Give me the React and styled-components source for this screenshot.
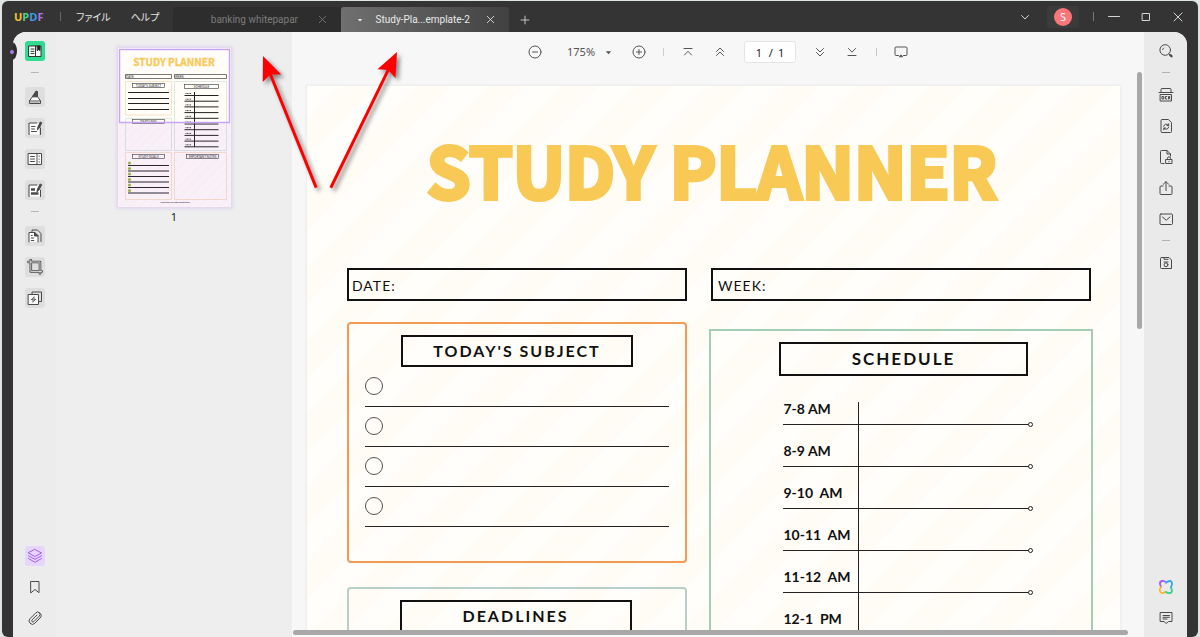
import React from "react"
import styled, { createGlobalStyle, css } from "styled-components"

const GlobalStyle = createGlobalStyle`
  * {
    box-sizing: border-box;
  }
  body {
    margin: 0;
    background: #dfe5e4;
    font-family: "Noto Sans", "Noto Sans CJK JP", sans-serif;
    font-size: 11px;
  }
  button {
    padding: 0;
    border: 0;
    background: none;
    font: inherit;
    color: inherit;
  }
  svg {
    display: block;
  }
`

const Frame = styled.div`
  position: relative;
  display: flex;
  flex-direction: column;
  height: 100vh;
  overflow: hidden;
`

const Shell = styled.div`
  flex: 1;
  min-height: 0;
  display: flex;
  flex-direction: column;
  margin: 1px 2px 0;
  border-radius: 6px;
  background: #343434;
  overflow: hidden;
`

const TitleBar = styled.header`
  display: flex;
  align-items: stretch;
  height: 31px;
  flex: none;
  padding: 0 4px 0 12px;
  color: #d6d6d6;
`

const Logo = styled.div`
  align-self: center;
  width: 46px;
  font: 700 11px/16px "Open Sans", sans-serif;
`

const LogoLetter = styled.span`
  color: ${p => p.$color};
`

const Divider = styled.span`
  align-self: center;
  flex: none;
  width: 1px;
  height: ${p => p.$height}px;
  margin-right: ${p => p.$after || 0}px;
  background: ${p => p.$color};
`

const Menu = styled.nav`
  display: flex;
  gap: 20px;
  width: 112px;
  padding-left: 15px;
`

const MenuButton = styled.button`
  flex: none;
  font-family: "Noto Sans CJK JP", sans-serif;
  font-feature-settings: "palt";
  font-size: 10px;
  color: #e4e4e4;
`

const Tab = styled.div`
  display: flex;
  align-items: center;
  width: 168px;
  margin-top: 6px;
  padding: 0 12px;
  border-radius: 3px 3px 0 0;
  color: #7c7c7c;
  background: #2d2d2d;
  ${p => p.$active && css`
    color: #e9e9e9;
    background: linear-gradient(90deg, #707070, #414141);
  `}
`

const TabName = styled.span`
  flex: 1;
  font-family: Roboto, sans-serif;
  font-size: 10px;
  text-align: right;
  white-space: nowrap;
`

const TabButton = styled.button`
  display: grid;
  place-items: center;
  width: ${p => p.$wide ? 32 : 14}px;
  margin-left: ${p => p.$push || 0}px;
`

const NewTab = styled(TabButton)`
  margin-top: 6px;
`

const WindowButtons = styled.div`
  display: flex;
  align-items: center;
  margin-left: auto;
`

const WindowButton = styled.button`
  display: grid;
  place-items: center;
  width: 32px;
  height: 22px;
  margin-right: ${p => p.$after || 0}px;
  background: ${p => p.$raised ? "#3b3b3b" : "none"};
  border-radius: 3px;
`

const Avatar = styled.span`
  width: 18px;
  height: 18px;
  border-radius: 50%;
  background: #fb7679;
  color: #fff;
  font-size: 11px;
  line-height: 18px;
  text-align: center;
`

const Body = styled.div`
  flex: 1;
  min-height: 0;
  display: grid;
  grid-template-columns: 43px 236px 1fr 43px;
  margin: 0 11px;
  border-radius: 13px 13px 0 0;
  background: #f7f7f7;
  overflow: hidden;
`

const Rail = styled.aside`
  position: relative;
  display: flex;
  flex-direction: column;
  align-items: center;
  gap: 11px;
  padding: 9px 0;
  color: #4a4a4a;
  background: ${p => p.$bg};
`

const RailSeparator = styled.span`
  width: 8px;
  height: 1px;
  flex: none;
  margin-bottom: ${p => p.$space}px;
  background: #b5b5b5;
`

const RailSpacer = styled.span`
  flex: 1;
`

const RailButton = styled.button`
  display: grid;
  place-items: center;
  flex: none;
  width: 20px;
  height: 20px;
  border-radius: 3px;
  background: ${p => p.$bg || "none"};
  color: ${p => p.$color || "inherit"};
`

const Notch = styled.span`
  position: absolute;
  left: -6px;
  top: 10px;
  width: 10px;
  height: 18px;
  border-radius: 50%;
  background: #2c2c2c;
`

const NotchDot = styled.span`
  position: absolute;
  z-index: 1;
  left: 10px;
  top: 50px;
  width: 4px;
  height: 4px;
  border-radius: 50%;
  background: #b07ae8;
`

const Thumbnails = styled.section`
  display: flex;
  flex-direction: column;
  align-items: center;
  padding-top: 16px;
  background: #eeeeee;
  color: #222;
`

const ThumbButton = styled.button`
  box-shadow: 0 0 3px 2px #e2d8ee;
`

const ThumbNumber = styled.span`
  margin-top: 3px;
  line-height: 14px;
`

const Viewer = styled.main`
  display: flex;
  flex-direction: column;
  min-width: 0;
  min-height: 0;
`

const Toolbar = styled.div`
  display: flex;
  align-items: center;
  justify-content: center;
  gap: 16px;
  height: 40px;
  flex: none;
  color: #555;
`

const ToolButton = styled.button`
  width: 16px;
  height: 16px;
`

const ZoomBox = styled.label`
  display: grid;
  grid-template-columns: 1fr 8px;
  align-items: center;
  width: 46px;
  margin: 0 2px 0 8px;
`

const ZoomSelect = styled.select`
  appearance: none;
  width: 38px;
  padding: 0;
  border: 0;
  background: none;
  color: #555;
  font: 11px/16px "Noto Sans", sans-serif;
`

const PageBox = styled.label`
  display: flex;
  align-items: center;
  justify-content: center;
  gap: 5px;
  width: 52px;
  height: 22px;
  border: 1px solid #e4e4e4;
  border-radius: 3px;
  background: #fff;
  color: #222;
`

const PageInput = styled.input`
  width: 8px;
  padding: 0;
  border: 0;
  background: none;
  color: inherit;
  font: inherit;
`

const Canvas = styled.div`
  flex: 1;
  min-height: 0;
  display: flex;
  align-items: flex-start;
  padding: 0 2px 0 15px;
`

const VScroll = styled.span`
  flex: none;
  width: 5px;
  height: 257px;
  margin-left: 17px;
  border-radius: 3px;
  background: #a8a8a8;
`

const HScroll = styled.span`
  flex: none;
  height: 5px;
  margin: 0 16px 2px 1px;
  border-radius: 3px;
  background: #a8a8a8;
`

const Sheet = styled.article`
  flex: 1;
  align-self: stretch;
  display: flex;
  flex-direction: column;
  min-width: 0;
  margin-top: 14px;
  padding: 0 27px 0 40px;
  overflow: hidden;
  color: #111;
  font-family: Lato, sans-serif;
  background: repeating-linear-gradient(
    135deg,
    #fffefa 0,
    #fffefa 22px,
    #fffbf5 28px,
    #fffbf5 48px,
    #fffefa 52px
  );
  box-shadow: 0 0 2px 1px #ebebeb;
`

const SheetTitle = styled.h1`
  flex: none;
  margin: 0;
  padding: 33px 16px 0 0;
  height: 182px;
  color: #f9c956;
  font: 700 70px/100px "Noto Sans CJK SC", sans-serif;
  -webkit-text-stroke: 4px #f9c956;
  text-align: center;
  white-space: nowrap;
`

const Columns = styled.div`
  flex: 1;
  min-height: 0;
  display: grid;
  grid-template-columns: 340fr 384fr;
  gap: 22px;
`

const Column = styled.div`
  display: flex;
  flex-direction: column;
  min-height: 0;
`

const Field = styled.div`
  flex: none;
  height: 33px;
  margin: 0 ${p => p.$inset || 0}px ${p => p.$below}px;
  padding-left: ${p => p.$pad}px;
  border: 2px solid #111;
  font-size: 14px;
  line-height: 32px;
  letter-spacing: 1px;
`

const Card = styled.section`
  flex: none;
  display: flex;
  flex-direction: column;
  align-items: center;
  padding-top: 11px;
  border: 2px solid ${p => p.$color};
  border-radius: ${p => p.$round ? 4 : 0}px;
`

const SubjectCard = styled(Card)`
  height: 241px;
  margin-bottom: 24px;
`

const ScheduleCard = styled(Card)`
  height: 600px;
  padding-left: 5px;
`

const DeadlineCard = styled(Card)`
  height: 241px;
  padding-right: 3px;
`

const CardTitle = styled.h2`
  flex: none;
  width: ${p => p.$large ? 249 : 232}px;
  margin: 0;
  border: 2px solid #111;
  font-size: ${p => p.$large ? 17 : 16}px;
  font-weight: 700;
  line-height: ${p => p.$large ? 30 : 28}px;
  letter-spacing: 2px;
  text-align: center;
`

const TaskList = styled.ul`
  align-self: stretch;
  margin: 0 16px;
  padding: 0;
  list-style: none;
`

const Task = styled.li`
  display: flex;
  height: 40px;
  padding-top: 10px;
  border-bottom: 1px solid #222;
`

const TaskRing = styled.span`
  width: 18px;
  height: 18px;
  border: 1px solid #555;
  border-radius: 50%;
`

const Hours = styled.table`
  width: 246px;
  margin: 26px 0 0 4px;
  border-spacing: 0;
  table-layout: fixed;
`

const Hour = styled.th`
  width: 76px;
  height: 42px;
  padding: 0 0 8px 1px;
  border-right: 1px solid #222;
  border-bottom: 1px solid #222;
  vertical-align: bottom;
  text-align: left;
  font-size: 14px;
  line-height: 14px;
  font-weight: 700;
  white-space: pre;

  tr:first-child & {
    height: 23px;
  }
`

const Plan = styled.td`
  position: relative;
  padding: 0;
  border-bottom: 1px solid #222;

  &::after {
    content: "";
    position: absolute;
    right: -4px;
    bottom: -3px;
    width: 5px;
    height: 5px;
    box-sizing: border-box;
    border: 1px solid #222;
    border-radius: 50%;
    background: #fffefa;
  }
`

const Annotations = styled.svg`
  position: absolute;
  left: 0;
  top: 0;
  filter: drop-shadow(3px 3px 2px rgba(0, 0, 0, 0.45));
  pointer-events: none;
`

const Icon = ({ children, size = 16, width = 1 }) => (
  <svg
    width={size}
    height={size}
    viewBox="0 0 16 16"
    fill="none"
    stroke="currentColor"
    strokeWidth={width}
    strokeLinecap="round"
    strokeLinejoin="round"
    aria-hidden="true">
    {children}
  </svg>
)

const icons = {
  reader: <>
    <path d="M2 3h12v10.500H2z" fill="#fff" stroke="#333" />
    <path d="M4 6h3M4 8.300h3M4 10.600h3M8.500 3v10.500" stroke="#333" />
    <path d="M10.500 3h2.500v4.500l-1.200-1-1.300 1z" fill="#222" stroke="#222" />
  </>,
  comment: <>
    <path d="M5.500 7.500L2.500 12v2.500h11V12l-3-4.500z" fill="#fff" />
    <path d="M2.500 12h11" />
    <path d="M5.500 7.500L9 2l1.500.5V7.500z" fill="currentColor" />
    <path d="M4 14h8" strokeWidth="1.500" opacity="0.5" />
  </>,
  edit: <>
    <path d="M2.500 3h9.500v11.500h-9.500z" fill="#fff" stroke="none" />
    <path d="M10 3H2v11.500M13.500 8v6.500" />
    <path d="M4.500 6.500h3.500M4.500 9h3M4.500 11.500h5" />
    <path d="M10.500 9.500l.4-2.500 2.300-5 1.600.7-2.300 5z" fill="currentColor" />
  </>,
  form: <>
    <path d="M1.500 2.500h13v11h-13z" fill="#fff" />
    <path d="M10 2.500v11M3.500 5.500h4M3.500 8h4M3.500 10.500h4M12.200 5v.5M12.200 8v.3M12.200 10.700v.5" />
  </>,
  fill: <>
    <path d="M2.500 3h11v11.500h-11z" fill="#fff" stroke="none" />
    <path d="M10 3H2v11.500M13.500 8v6.500" />
    <path d="M4 7.500h4M4 11.500h7.500" strokeWidth="2.500" strokeLinecap="butt" />
    <path d="M10 9.500l.6-2.500 2.500-5 1.600.7-2.500 5z" fill="currentColor" />
  </>,
  pages: <>
    <path d="M5 3.500V2h5.500l3.500 3.500v8" />
    <path d="M2 14V4.500h5.500L11 8v6" fill="#fff" />
    <path d="M7.500 4.500V8H11z" fill="currentColor" />
    <path d="M4.300 7.500h1M4.300 10h2.500M4.300 12.500h2.500" />
  </>,
  crop: <>
    <path d="M1.500 3h11.500v11.500M3.800 1v11.500h11" strokeWidth="2.600" />
    <path d="M1.500 3h11.500v11.500M3.800 1v11.500h11" stroke="#eee" strokeWidth="0.800" />
  </>,
  convert: <>
    <path d="M5 4V2h9.500v9.500h-2.500" />
    <path d="M1.500 4.500h10v10h-10z" fill="#f7f7f7" />
    <path d="M4.500 9.500L7 7.200M6 11.800L8.500 9.500M7 7.200v1.600M6 11.800v-1.600M4.500 9.500h1.500M8.500 9.500H7" strokeWidth="0.800" />
  </>,
  layers: <>
    <path d="M8 1.500l6.500 3.500L8 8.500 1.500 5z" />
    <path d="M1.500 7.800L8 11.300l6.500-3.500M1.500 10.500L8 14.300l6.500-3.800" />
  </>,
  bookmark: <path d="M4 2.500h8v11.200L8 10.500l-4 3.200z" />,
  clip: <path d="M13.500 7.500l-5.700 5.800a3.300 3.300 0 0 1-4.700-4.700l5.800-5.800a2.300 2.300 0 0 1 3.400 0 2.300 2.300 0 0 1 0 3.300l-5.400 5.500a1.200 1.200 0 0 1-1.800-1.700L10 5M13.500 7.500c1.500-1.800.6-4-1-4.700" />,
  search: <>
    <circle cx="7.200" cy="7" r="5.300" />
    <path d="M4.700 6.500a2.500 2.500 0 0 1 1-1.500" />
    <path d="M11 11l1.300 1.200" />
    <path d="M12.300 12.200l1.200 1" strokeWidth="2.400" />
  </>,
  ocr: <>
    <path d="M3 5.500V2.500a1 1 0 0 1 1-1h8a1 1 0 0 1 1 1v3M1 5.500h14" />
    <path d="M2.500 7.500h11v6.500h-11z" />
    <path d="M4.300 9.500h1.500v2.500H4.300zM8.800 9.500H7.500v2.500h1.300M10.500 12V9.500h1.400v1.200h-1.300l1.400 1.300" />
  </>,
  rotate: <>
    <path d="M10 1.500H4a1 1 0 0 0-1 1v11a1 1 0 0 0 1 1h8.500a1 1 0 0 0 1-1V5z" />
    <path d="M5.700 8.200a2.700 2.700 0 0 1 4.800-1M10.700 9a2.700 2.700 0 0 1-4.700 1.300" />
    <path d="M10.700 5.800v1.700H9M5.800 11.800V10H7.500" />
  </>,
  protect: <>
    <path d="M6 14.500H3.500a1 1 0 0 1-1-1v-11a1 1 0 0 1 1-1H9L12.500 5v2M9 1.500V5h3.500" />
    <path d="M8 10.500h6v4H8zM9.500 10.500V9.300a1.500 1.500 0 0 1 3 0v1.200M11 12.300v.5" />
  </>,
  share: <path d="M5 6H3a1 1 0 0 0-1 1v6.500a1 1 0 0 0 1 1h10a1 1 0 0 0 1-1V7a1 1 0 0 0-1-1h-2M8 10.500V1.800M5.300 4.300L8 1.600l2.700 2.700" />,
  mail: <>
    <rect x="2" y="3" width="12.500" height="10.500" rx="1" />
    <path d="M4.500 6l3.700 3.200L12 6" />
  </>,
  save: <>
    <path d="M3.500 2.500h7.500L13.500 5v8.500h-10a1 1 0 0 1-1-1v-9a1 1 0 0 1 1-1z" />
    <path d="M6 2.500v1.800h4M6 7h4" />
    <circle cx="8" cy="9.800" r="1.900" />
  </>,
  note: <>
    <path d="M2.500 2.500h11.500v9H10.500L8.200 13.500 6 11.500H2.500z" />
    <path d="M5 5.500h6.500M5 7.300h6.500M5 9h4" />
  </>,
  minus: <><circle cx="8" cy="8" r="6" /><path d="M5.500 8h5" /></>,
  plus: <><circle cx="8" cy="8" r="6" /><path d="M5.500 8h5M8 5.500v5" /></>,
  first: <path d="M4 4.500h8M4.500 11L8 7.300l3.500 3.700" />,
  prev: <path d="M4.500 7.500L8 4l3.500 3.500M4.500 11.500L8 8l3.500 3.500" />,
  next: <path d="M4.500 4.500L8 8l3.500-3.500M4.500 8.500L8 12l3.500-3.500" />,
  last: <path d="M4.500 4.500L8 8.200l3.500-3.700M4 11.500h8" />,
  present: <>
    <path d="M5.500 11.500H3a1 1 0 0 1-1-1V4a1 1 0 0 1 1-1h10a1 1 0 0 1 1 1v6.500a1 1 0 0 1-1 1h-2.500" />
    <path d="M6.500 12.500L8 10.800l1.500 1.700z" fill="currentColor" />
  </>,
  close: <path d="M4 4l8 8M12 4l-8 8" />,
  add: <path d="M8 3.500v9M3.500 8h9" />,
  chevron: <path d="M4.500 6.500L8 10l3.500-3.500" />,
  minimize: <path d="M2.500 7.500h11" />,
  maximize: <path d="M4.500 4.500h7v7h-7z" />,
  caret: <path d="M2 5h12l-6 7z" fill="currentColor" stroke="none" />,
}

const Clover = () => (
  <svg width="16" height="16" viewBox="0 0 16 16" fill="none" strokeWidth="1.800" strokeLinecap="round">
    <path d="M8 3.500C6 1 1.500 1.500 2 5c.1 1 .8 1.800 1 3" stroke="#a35cf5" />
    <path d="M3 8c-1.500 1.800-2 5.500 1.300 6 1.500.1 2.300-.9 3.700-1" stroke="#ffb52e" />
    <path d="M8 13c2 1.500 5.600 1.800 6-1.200.1-1.500-.9-2.300-1-3.800" stroke="#35d08b" />
    <path d="M13 8c1.500-2 1.700-5.500-1-6-1.700-.2-2.700 1-4 1.500" stroke="#32a8f5" />
  </svg>
)

const tasks = [1, 2, 3, 4]

const hours = [
  "7-8 AM",
  "8-9 AM",
  "9-10  AM",
  "10-11  AM",
  "11-12  AM",
  "12-1  PM",
]

const leftTools = [
  ["comment", "Comment"],
  ["edit", "Edit PDF"],
  ["form", "Prepare form"],
  ["fill", "Fill and sign"],
]

const pageTools = [
  ["pages", "Organize pages"],
  ["crop", "Crop pages"],
  ["convert", "Page tools"],
]

const rightTools = [
  ["ocr", "OCR"],
  ["rotate", "Convert"],
  ["protect", "Protect"],
  ["share", "Share"],
  ["mail", "Email"],
]

const ThumbLabel = ({ x, y, width, children }) => (
  <>
    <rect x={x} y={y} width={width} height="4" fill="none" stroke="#333" strokeWidth="0.600" />
    <text x={x + width / 2} y={y + 3} textAnchor="middle" fontSize="3">{children}</text>
  </>
)

const Thumbnail = () => (
  <svg width="113" height="159" viewBox="0 0 113 159" fontFamily="Lato, sans-serif" fill="#222">
    <defs>
      <pattern id="stripes" width="7" height="7" patternUnits="userSpaceOnUse" patternTransform="rotate(45)">
        <rect width="7" height="7" fill="#fffefa" />
        <rect width="3" height="7" fill="#fffbf5" />
      </pattern>
    </defs>
    <rect width="113" height="159" fill="url(#stripes)" />
    <text x="56" y="18" textAnchor="middle" fontSize="10" fontWeight="700"
      fontFamily="Noto Sans CJK SC" fill="#f9c956" stroke="#f9c956" strokeWidth="0.300">
      STUDY PLANNER
    </text>
    <g fill="none" strokeWidth="0.800">
      <path d="M7.500 26.500h46v4h-46zM56.500 26.500h52v4h-52z" stroke="#555" />
      <path d="M7.500 33.500h46V67h-46zM7.500 104.500h46v47h-46zM56.500 104.500h52v47h-52z" stroke="#f6dcbd" />
      <path d="M7.500 70.500h46v32h-46zM56.500 33.500h52v69h-52z" stroke="#d6e2da" />
    </g>
    <text x="8" y="30" fontSize="3">DATE:</text>
    <text x="57" y="30" fontSize="3">WEEK:</text>
    <ThumbLabel x={14.5} y={35.5} width={32}>TODAY'S SUBJECT</ThumbLabel>
    <ThumbLabel x={66.500} y={36.500} width={34}>SCHEDULE</ThumbLabel>
    <ThumbLabel x={14.500} y={71.500} width={32}>DEADLINES</ThumbLabel>
    <ThumbLabel x={14.500} y={106.500} width={32}>STUDY GOALS</ThumbLabel>
    <ThumbLabel x={68.500} y={106.500} width={32}>IMPORTANT NOTES</ThumbLabel>
    <g stroke="#222" strokeWidth="1">
      <path d="M10 44.500h41M10 50.500h41M10 55.500h41M10 61.500h41M76.500 44v55" />
      {[0, 1, 2, 3, 4, 5, 6, 7, 8, 9].map(n => (
        <path key={n} d={`M66.500 ${47.500 + n * 5.700}h34`} />
      ))}
      {[0, 1, 2, 3, 4, 5].map(n => (
        <path key={n} d={`M10 ${117.500 + n * 5.500}h41`} />
      ))}
    </g>
    {[0, 1, 2, 3, 4, 5].map(n => (
      <circle key={n} cx="11.500" cy={115 + n * 5.500} r="1.600" fill="#9cb83e" />
    ))}
    {[0, 1, 2, 3, 4, 5, 6, 7, 8, 9].map(n => (
      <path key={n} d={`M67.500 ${45.500 + n * 5.700}h6`} stroke="#444" strokeDasharray="1 0.500" />
    ))}
    <text x="57" y="155" textAnchor="middle" fontSize="2" fontWeight="700">WWW.REALLYGREATSITE.COM</text>
    <rect y="75" width="113" height="84" fill="#a855f7" opacity="0.080" />
    <rect x="1.500" y="1.500" width="110" height="73" fill="none" stroke="#c9a5f5" strokeWidth="1.500" />
  </svg>
)

const Arrow = ({ x, y, angle, length }) => (
  <g transform={`translate(${x} ${y}) rotate(${angle})`}>
    <path d={`M0 18V${length}`} stroke="#f00" strokeWidth="3" />
    <path d="M0 0l10 24-10-4-10 4z" fill="#f00" />
  </g>
)

const Tool = ({ name, label, ...rest }) => (
  <RailButton aria-label={label} {...rest}>
    <Icon>{icons[name]}</Icon>
  </RailButton>
)

const BarTool = ({ name, label }) => (
  <ToolButton aria-label={label}>
    <Icon>{icons[name]}</Icon>
  </ToolButton>
)

const Header = () => (
  <TitleBar>
    <Logo>
      <LogoLetter $color="#f7c325">U</LogoLetter>
      <LogoLetter $color="#4fd18b">P</LogoLetter>
      <LogoLetter $color="#3f9be8">D</LogoLetter>
      <LogoLetter $color="#b36ee8">F</LogoLetter>
    </Logo>
    <Divider $height={9} $color="#666" />
    <Menu>
      <MenuButton>ファイル</MenuButton>
      <MenuButton>ヘルプ</MenuButton>
    </Menu>
    <Tab>
      <TabName>banking whitepapar</TabName>
      <TabButton aria-label="Close tab" $push={17}><Icon size={13}>{icons.close}</Icon></TabButton>
    </Tab>
    <Tab $active>
      <TabButton aria-label="Tab menu"><Icon size={6}>{icons.caret}</Icon></TabButton>
      <TabName>Study-Pla...emplate-2</TabName>
      <TabButton aria-label="Close tab" $push={13}><Icon size={13}>{icons.close}</Icon></TabButton>
    </Tab>
    <NewTab aria-label="New tab" $wide><Icon size={14}>{icons.add}</Icon></NewTab>
    <WindowButtons>
      <WindowButton aria-label="All tabs" $after={6}><Icon>{icons.chevron}</Icon></WindowButton>
      <WindowButton aria-label="Account" $raised $after={14}><Avatar>S</Avatar></WindowButton>
      <Divider $height={9} $color="#777" $after={4} />
      <WindowButton aria-label="Minimize"><Icon>{icons.minimize}</Icon></WindowButton>
      <WindowButton aria-label="Maximize"><Icon>{icons.maximize}</Icon></WindowButton>
      <WindowButton aria-label="Close"><Icon>{icons.close}</Icon></WindowButton>
    </WindowButtons>
  </TitleBar>
)

const LeftRail = () => (
  <Rail $bg="#ececec">
    <Notch />
    <Tool name="reader" label="Reader" $bg="#2fdc92" />
    <RailSeparator $space={3} />
    {leftTools.map(([name, label]) => <Tool key={name} name={name} label={label} $bg="#dedede" />)}
    <RailSeparator $space={3} />
    {pageTools.map(([name, label]) => <Tool key={name} name={name} label={label} $bg="#dedede" />)}
    <RailSpacer />
    <Tool name="layers" label="Layers" $bg="#e6d6fb" $color="#a45cf0" />
    <Tool name="bookmark" label="Bookmarks" />
    <Tool name="clip" label="Attachments" />
  </Rail>
)

const RightRail = () => (
  <Rail $bg="#eaeaea">
    <Tool name="search" label="Search" />
    <RailSeparator $space={1} />
    {rightTools.map(([name, label]) => <Tool key={name} name={name} label={label} />)}
    <RailSeparator $space={1} />
    <Tool name="save" label="Save as" />
    <RailSpacer />
    <RailButton aria-label="Assistant"><Clover /></RailButton>
    <Tool name="note" label="Comments" />
  </Rail>
)

const ViewerToolbar = () => (
  <Toolbar>
    <BarTool name="minus" label="Zoom out" />
    <ZoomBox>
      <ZoomSelect aria-label="Zoom" defaultValue="175">
        <option value="175">175%</option>
      </ZoomSelect>
      <Icon size={7}>{icons.caret}</Icon>
    </ZoomBox>
    <BarTool name="plus" label="Zoom in" />
    <Divider $height={8} $color="#d0d0d0" />
    <BarTool name="first" label="First page" />
    <BarTool name="prev" label="Previous page" />
    <PageBox>
      <PageInput aria-label="Page" defaultValue="1" />
      <span>/</span>
      <span>1</span>
    </PageBox>
    <BarTool name="next" label="Next page" />
    <BarTool name="last" label="Last page" />
    <Divider $height={8} $color="#c8c8c8" />
    <BarTool name="present" label="Slideshow" />
  </Toolbar>
)

const Planner = () => (
  <Sheet>
    <SheetTitle>STUDY PLANNER</SheetTitle>
    <Columns>
      <Column>
        <Field $below={21} $pad={3}>DATE:</Field>
        <SubjectCard $color="#f39a55" $round>
          <CardTitle>TODAY'S SUBJECT</CardTitle>
          <TaskList>
            {tasks.map(n => <Task key={n}><TaskRing /></Task>)}
          </TaskList>
        </SubjectCard>
        <DeadlineCard $color="#b9cfca" $round>
          <CardTitle>DEADLINES</CardTitle>
        </DeadlineCard>
      </Column>
      <Column>
        <Field $below={28} $pad={5} $inset={2}>WEEK:</Field>
        <ScheduleCard $color="#a5cdb3">
          <CardTitle $large>SCHEDULE</CardTitle>
          <Hours>
            <tbody>
              {hours.map(hour => (
                <tr key={hour}>
                  <Hour scope="row">{hour}</Hour>
                  <Plan />
                </tr>
              ))}
            </tbody>
          </Hours>
        </ScheduleCard>
      </Column>
    </Columns>
  </Sheet>
)

export default () =>

<Frame>
  <GlobalStyle />
  <Shell>
    <Header />
    <Body>
      <LeftRail />
      <Thumbnails>
        <ThumbButton aria-label="Page 1"><Thumbnail /></ThumbButton>
        <ThumbNumber>1</ThumbNumber>
      </Thumbnails>
      <Viewer>
        <ViewerToolbar />
        <Canvas>
          <Planner />
          <VScroll />
        </Canvas>
        <HScroll />
      </Viewer>
      <RightRail />
    </Body>
  </Shell>
  <NotchDot />
  <Annotations width="420" height="200">
    <Arrow x={263} y={56} angle={-22} length={142} />
    <Arrow x={397} y={52} angle={26} length={151} />
  </Annotations>
</Frame>
